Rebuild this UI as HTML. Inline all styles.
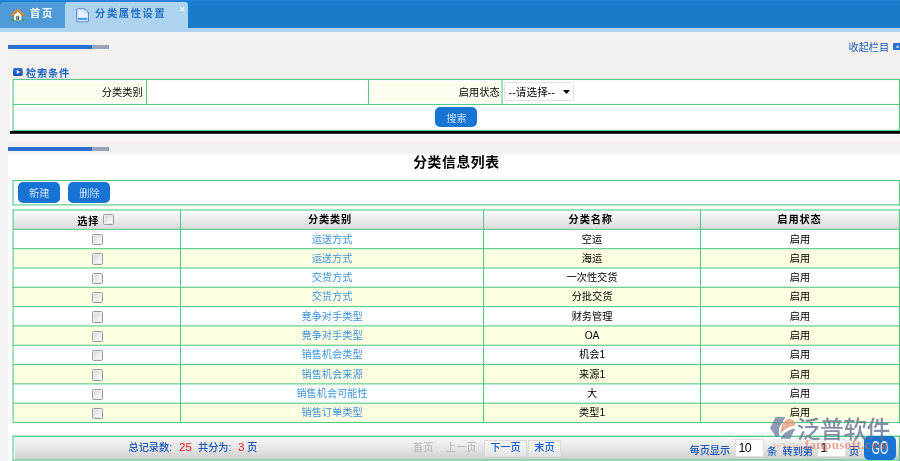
<!DOCTYPE html>
<html lang="zh-CN">
<head>
<meta charset="utf-8">
<title>分类属性设置</title>
<style>
html,body{margin:0;padding:0;}
body{width:900px;height:461px;overflow:hidden;background:#f4f4f4;position:relative;font-family:"Liberation Sans","Noto Sans CJK SC",sans-serif;font-size:10.2px;color:#000;}
.abs{position:absolute;}
#page{left:0;top:0;width:900px;height:461px;will-change:transform;}
#tabbar{left:0;top:0;width:900px;height:28px;background:linear-gradient(#2586da 0,#197bcc 2px,#197bcc 100%);}
#tabstrip{left:0;top:28px;width:900px;height:4px;background:#aed3ee;}
#tabhome{left:0;top:2px;width:65px;height:26px;background:#4f9ad8;border-top-left-radius:4px;color:#fff;font-weight:bold;font-size:10.2px;line-height:24px;letter-spacing:1.7px;}
#tabact{left:65px;top:2px;width:123px;height:26px;background:#aed3ee;border-radius:3px 3px 0 0;color:#2470c8;font-weight:bold;font-size:10.2px;line-height:24px;letter-spacing:1.7px;}
#main{left:8px;top:40px;width:892px;height:114px;background:#f3f0ed;}
#main2{left:8px;top:154px;width:892px;height:307px;background:#fff;}
.bar{height:4px;width:84px;background:#2b6fd0;}
.bar2{height:4px;width:17px;background:#9aa4b8;}
.btn{width:42px;height:20.4px;border-radius:5px;background:#1874d4;color:#fff;font-size:10.2px;font-weight:300;line-height:23px;text-align:center;text-indent:1px;}
.hd{background:linear-gradient(#fff 0,#fcfcfc 5%,#f6f6f6 12%,#e9e9e9 55%,#dcdcdc 93%,#e8dde4 100%);}
.c{text-align:center;font-size:10.2px;white-space:nowrap;}
.h{font-weight:bold;letter-spacing:.85px;}
.lk{color:#3a94e0;}
.cb{width:9.3px;height:9.3px;border:1px solid #9c9c9c;border-radius:1.5px;background:linear-gradient(135deg,#d6d6d6,#fafafa 85%);box-shadow:inset 0 0 0 1px #ececec;}
.pg{background:linear-gradient(#f6f6f6,#e6e6e6 45%,#cdcdcd);}
.pt{font-size:10.2px;line-height:14px;white-space:nowrap;}
.pb{height:15px;line-height:13.5px;font-weight:500;border:1px solid #dcdcdc;background:rgba(255,255,255,.35);color:#1b5fd0;font-size:10.2px;text-align:center;white-space:nowrap;}
.pi{width:24px;height:16px;border:1px solid #e0e0e0;background:#fff;font-size:12.4px;letter-spacing:-.7px;line-height:17.5px;padding-left:2.5px;}
</style>
</head>
<body>
<div id="page" class="abs">
<div id="tabbar" class="abs"></div>
<div id="tabstrip" class="abs"></div>
<div id="tabhome" class="abs"><svg class="abs" style="left:10px;top:5px" width="16" height="15" viewBox="0 0 16 15"><path d="M4 7.6 L7.75 4.3 L11.4 7.6 L11.4 12.9 L4 12.9 Z" fill="#f6f2ec"/><path d="M1.6 8.3 L7.75 3.1 L13.9 8.3" fill="none" stroke="#c97d30" stroke-width="2.5" stroke-linejoin="round" stroke-linecap="round"/><path d="M2.2 7.5 L7.75 2.8 L13.3 7.5" fill="none" stroke="#e9b777" stroke-width=".7" stroke-linejoin="round" stroke-linecap="round"/><rect x="6.2" y="9.2" width="2.9" height="3.9" fill="#5e5e5e"/><rect x="7.4" y="9.2" width=".5" height="3.9" fill="#b8b8b8"/><rect x="1" y="12.2" width="3.6" height="1.6" rx=".7" fill="#3fa22a"/><rect x="10.8" y="12.2" width="3.6" height="1.6" rx=".7" fill="#3fa22a"/><rect x="4" y="12.9" width="7.4" height=".8" fill="#8fbf7a"/></svg><span class="abs" style="left:30px;top:0">首页</span></div>
<div id="tabact" class="abs"><svg class="abs" style="left:11px;top:6px" width="14" height="15" viewBox="0 0 14 15"><defs><linearGradient id="dg" x1="0" y1="0" x2="0" y2="1"><stop offset="0" stop-color="#dbe6fa"/><stop offset="1" stop-color="#ffffff"/></linearGradient></defs><path d="M1.9 .8 L8.4 .8 L12.4 4.6 L12.4 12.6 Q12.4 13.8 11.2 13.8 L1.9 13.8 Q.7 13.8 .7 12.6 L.7 2 Q.7 .8 1.9 .8 Z" fill="url(#dg)" stroke="#5a8ad8" stroke-width="1.1"/><path d="M8.4 1.2 L8.4 4.6 L12 4.6 Z" fill="#f4f8ff" stroke="#8fb0e6" stroke-width=".5"/><rect x="1.7" y="9.9" width="9.7" height="2.3" fill="#4da3f2"/><rect x="1.7" y="9.2" width="9.7" height=".8" fill="#b9d8fa"/></svg><span class="abs" style="left:30px;top:0">分类属性设置</span><span class="abs" style="left:114px;top:-5.5px;color:#fff;font-size:11px;font-weight:normal;letter-spacing:0">×</span></div>
<div id="main" class="abs"></div>
<div class="abs bar" style="left:8px;top:45px"></div><div class="abs bar2" style="left:92px;top:45px"></div>
<div class="abs" style="left:848.5px;top:40.7px;color:#1b5fb8;font-size:10.2px;line-height:14px;white-space:nowrap">收起栏目</div>
<svg class="abs" style="left:893px;top:43px" width="7" height="7"><rect x="0" y="0" width="10" height="7" rx="1" fill="#2b6fd0"/><path d="M2.9 4.4 L4.6 2.3 L6.3 4.4 Z" fill="#fff"/></svg>
<svg class="abs" style="left:13.2px;top:67.9px" width="9.7" height="8.1" viewBox="0 0 9.7 8.1"><defs><linearGradient id="sg" x1="0" y1="0" x2="0" y2="1"><stop offset="0" stop-color="#2c74da"/><stop offset="1" stop-color="#1750b6"/></linearGradient></defs><rect width="9.7" height="8.1" rx="1.6" fill="url(#sg)"/><path d="M3.8 1.9 L7 4 L3.8 6 Z" fill="#fff"/></svg>
<div class="abs" style="left:26px;top:65.6px;color:#1b63c4;font-weight:bold;font-size:10.2px;letter-spacing:.85px;line-height:16px">检索条件</div>
<svg class="abs" style="left:0;top:0" width="900" height="140" viewBox="0 0 900 140"><rect x="9.5" y="78.8" width="891" height="56.5" fill="#fff"/><rect x="9.5" y="77.9" width="891" height=".9" fill="#fbe9ec"/></svg>
<svg class="abs" style="left:0;top:125px" width="900" height="12" viewBox="0 125 900 12"><rect x="9.9" y="130.95" width="891" height="2.85" fill="#000"/></svg>
<div class="abs" style="left:8px;top:135px;width:892px;height:7px;background:#f4f4f4"></div>
<div class="abs bar" style="left:8px;top:147px"></div><div class="abs bar2" style="left:92px;top:147px"></div>
<div id="main2" class="abs"></div>
<svg class="abs" style="left:0;top:0" width="900" height="140" viewBox="0 0 900 140"><rect x="15" y="81.2" width="130.2" height="21.5" fill="#fdfdf0"/><rect x="370" y="81.2" width="130.2" height="21.5" fill="#fdfdf0"/></svg>
<div class="abs" style="left:14px;top:81.3px;width:128.6px;height:23px;line-height:23px;text-align:right">分类类别</div>
<div class="abs" style="left:369px;top:81.3px;width:130.6px;height:23px;line-height:23px;text-align:right">启用状态</div>
<div class="abs" style="left:504px;top:82px;width:68px;height:17px;border:1px solid #e2e2e2;border-radius:2px;background:#fff;line-height:17px"><span class="abs" style="left:3.5px;top:.8px;white-space:nowrap;font-size:10.6px;letter-spacing:.1px">--请选择--</span><svg class="abs" style="left:58px;top:7px" width="7" height="4"><path d="M0 0 L7 0 L3.5 4 Z" fill="#000"/></svg></div>
<div class="abs btn" style="left:435px;top:107px">搜索</div>
<div class="abs" style="left:10.4px;top:154.3px;width:892px;height:17px;line-height:17px;text-align:center;font-size:13.8px;letter-spacing:.6px;font-weight:bold">分类信息列表</div>
<div class="abs btn" style="left:17.8px;top:182.4px">新建</div>
<div class="abs btn" style="left:68px;top:182.4px">删除</div>
<div class="abs hd" style="left:13px;top:211px;width:887px;height:18px"></div>
<div class="abs" style="left:13px;top:230px;width:887px;height:19px;background:#fff"></div>
<div class="abs" style="left:13px;top:249px;width:887px;height:19px;background:#ffffe1"></div>
<div class="abs" style="left:13px;top:268px;width:887px;height:20px;background:#fff"></div>
<div class="abs" style="left:13px;top:288px;width:887px;height:19px;background:#ffffe1"></div>
<div class="abs" style="left:13px;top:307px;width:887px;height:19px;background:#fff"></div>
<div class="abs" style="left:13px;top:326px;width:887px;height:20px;background:#ffffe1"></div>
<div class="abs" style="left:13px;top:346px;width:887px;height:19px;background:#fff"></div>
<div class="abs" style="left:13px;top:365px;width:887px;height:19px;background:#ffffe1"></div>
<div class="abs" style="left:13px;top:384px;width:887px;height:20px;background:#fff"></div>
<div class="abs" style="left:13px;top:404px;width:887px;height:19px;background:#ffffe1"></div>
<div class="abs" style="left:13px;top:436px;width:887px;height:25px;background:#fff"></div><div class="abs pg" style="left:15px;top:438px;width:884px;height:21.5px"></div>
<svg class="abs" style="left:0;top:0" width="900" height="461" viewBox="0 0 900 461" fill="#56cb89"><rect x="13" y="78.94" width="887" height="1.12"/><rect x="13" y="103.94" width="887" height="1.12"/><rect x="13" y="129.84" width="887" height="1.12"/><rect x="12.49" y="79.00" width="1.12" height="52.00"/><rect x="898.84" y="79.00" width="1.12" height="52.00"/><rect x="145.94" y="79.00" width="1.12" height="26.00"/><rect x="367.94" y="79.00" width="1.12" height="26.00"/><rect x="501.44" y="79.00" width="1.12" height="26.00"/><rect x="13" y="179.99" width="887" height="1.12"/><rect x="13" y="204.34" width="887" height="1.12"/><rect x="12.49" y="180.00" width="1.12" height="25.50"/><rect x="898.84" y="180.00" width="1.12" height="25.50"/><rect x="13" y="209.44" width="887" height="1.12"/><rect x="13" y="228.76" width="887" height="1.12"/><rect x="13" y="248.08" width="887" height="1.12"/><rect x="13" y="267.39" width="887" height="1.12"/><rect x="13" y="286.71" width="887" height="1.12"/><rect x="13" y="306.03" width="887" height="1.12"/><rect x="13" y="325.35" width="887" height="1.12"/><rect x="13" y="344.67" width="887" height="1.12"/><rect x="13" y="363.98" width="887" height="1.12"/><rect x="13" y="383.30" width="887" height="1.12"/><rect x="13" y="402.62" width="887" height="1.12"/><rect x="13" y="421.94" width="887" height="1.12"/><rect x="12.49" y="209.44" width="1.12" height="213.62"/><rect x="179.94" y="209.44" width="1.12" height="213.62"/><rect x="482.99" y="209.44" width="1.12" height="213.62"/><rect x="699.94" y="209.44" width="1.12" height="213.62"/><rect x="898.84" y="209.44" width="1.12" height="213.62"/><rect x="13" y="435.64" width="887" height="1.12"/><rect x="13" y="435.94" width="887" height="1.12"/><rect x="13" y="459.54" width="887" height="1.12"/><rect x="12.49" y="435.60" width="1.12" height="25.40"/><rect x="898.84" y="435.60" width="1.12" height="25.40"/></svg>
<div class="abs c h" style="left:11.5px;top:215.2px;width:167.5px;height:14px;line-height:14px"><span style="margin-right:14px">选择</span></div>
<div class="abs cb" style="left:102.5px;top:214px"></div>
<div class="abs c h" style="left:178.5px;top:212.7px;width:303.1px;height:14px;line-height:14px">分类类别</div>
<div class="abs c h" style="left:482.2px;top:212.7px;width:217.0px;height:14px;line-height:14px">分类名称</div>
<div class="abs c h" style="left:700.0px;top:212.7px;width:198.9px;height:14px;line-height:14px">启用状态</div>
<div class="abs cb" style="left:91.8px;top:234.1px"></div>
<div class="abs c lk" style="left:180.5px;top:232.5px;width:303.1px;height:14px;line-height:14px">运送方式</div>
<div class="abs c " style="left:483.6px;top:232.5px;width:216.9px;height:14px;line-height:14px">空运</div>
<div class="abs c " style="left:700.5px;top:232.5px;width:198.9px;height:14px;line-height:14px">启用</div>
<div class="abs cb" style="left:91.8px;top:253.4px"></div>
<div class="abs c lk" style="left:180.5px;top:251.8px;width:303.1px;height:14px;line-height:14px">运送方式</div>
<div class="abs c " style="left:483.6px;top:251.8px;width:216.9px;height:14px;line-height:14px">海运</div>
<div class="abs c " style="left:700.5px;top:251.8px;width:198.9px;height:14px;line-height:14px">启用</div>
<div class="abs cb" style="left:91.8px;top:272.7px"></div>
<div class="abs c lk" style="left:180.5px;top:271.1px;width:303.1px;height:14px;line-height:14px">交货方式</div>
<div class="abs c " style="left:483.6px;top:271.1px;width:216.9px;height:14px;line-height:14px">一次性交货</div>
<div class="abs c " style="left:700.5px;top:271.1px;width:198.9px;height:14px;line-height:14px">启用</div>
<div class="abs cb" style="left:91.8px;top:292.0px"></div>
<div class="abs c lk" style="left:180.5px;top:290.4px;width:303.1px;height:14px;line-height:14px">交货方式</div>
<div class="abs c " style="left:483.6px;top:290.4px;width:216.9px;height:14px;line-height:14px">分批交货</div>
<div class="abs c " style="left:700.5px;top:290.4px;width:198.9px;height:14px;line-height:14px">启用</div>
<div class="abs cb" style="left:91.8px;top:311.3px"></div>
<div class="abs c lk" style="left:180.5px;top:309.7px;width:303.1px;height:14px;line-height:14px">竞争对手类型</div>
<div class="abs c " style="left:483.6px;top:309.7px;width:216.9px;height:14px;line-height:14px">财务管理</div>
<div class="abs c " style="left:700.5px;top:309.7px;width:198.9px;height:14px;line-height:14px">启用</div>
<div class="abs cb" style="left:91.8px;top:330.7px"></div>
<div class="abs c lk" style="left:180.5px;top:329.1px;width:303.1px;height:14px;line-height:14px">竞争对手类型</div>
<div class="abs c " style="left:483.6px;top:329.1px;width:216.9px;height:14px;line-height:14px">OA</div>
<div class="abs c " style="left:700.5px;top:329.1px;width:198.9px;height:14px;line-height:14px">启用</div>
<div class="abs cb" style="left:91.8px;top:350.0px"></div>
<div class="abs c lk" style="left:180.5px;top:348.4px;width:303.1px;height:14px;line-height:14px">销售机会类型</div>
<div class="abs c " style="left:483.6px;top:348.4px;width:216.9px;height:14px;line-height:14px">机会1</div>
<div class="abs c " style="left:700.5px;top:348.4px;width:198.9px;height:14px;line-height:14px">启用</div>
<div class="abs cb" style="left:91.8px;top:369.3px"></div>
<div class="abs c lk" style="left:180.5px;top:367.7px;width:303.1px;height:14px;line-height:14px">销售机会来源</div>
<div class="abs c " style="left:483.6px;top:367.7px;width:216.9px;height:14px;line-height:14px">来源1</div>
<div class="abs c " style="left:700.5px;top:367.7px;width:198.9px;height:14px;line-height:14px">启用</div>
<div class="abs cb" style="left:91.8px;top:388.6px"></div>
<div class="abs c lk" style="left:180.5px;top:387.0px;width:303.1px;height:14px;line-height:14px">销售机会可能性</div>
<div class="abs c " style="left:483.6px;top:387.0px;width:216.9px;height:14px;line-height:14px">大</div>
<div class="abs c " style="left:700.5px;top:387.0px;width:198.9px;height:14px;line-height:14px">启用</div>
<div class="abs cb" style="left:91.8px;top:407.9px"></div>
<div class="abs c lk" style="left:180.5px;top:406.3px;width:303.1px;height:14px;line-height:14px">销售订单类型</div>
<div class="abs c " style="left:483.6px;top:406.3px;width:216.9px;height:14px;line-height:14px">类型1</div>
<div class="abs c " style="left:700.5px;top:406.3px;width:198.9px;height:14px;line-height:14px">启用</div>
<div class="abs pt" style="left:128.5px;top:441px;color:#1c57b8;font-weight:500">总记录数:</div>
<div class="abs pt" style="left:179px;top:440.2px;color:#f02020;font-size:11.5px">25</div>
<div class="abs pt" style="left:198px;top:441px;color:#1c57b8;font-weight:500">共分为:</div>
<div class="abs pt" style="left:238px;top:440.2px;color:#f02020;font-size:11.5px">3</div>
<div class="abs pt" style="left:247px;top:441px;color:#1c57b8;font-weight:500">页</div>
<div class="abs pt" style="left:413px;top:441px;color:#b4b4b4">首页</div>
<div class="abs pt" style="left:446px;top:441px;color:#b4b4b4">上一页</div>
<div class="abs pb" style="left:484px;top:440px;width:41px">下一页</div>
<div class="abs pb" style="left:528px;top:440px;width:31px">末页</div>
<div class="abs pt" style="left:689.5px;top:444px;color:#1c57b8;font-weight:500">每页显示</div>
<div class="abs pi" style="left:735px;top:439px">10</div>
<div class="abs pt" style="left:767px;top:444.5px;color:#1c57b8;font-weight:500">条</div>
<div class="abs pt" style="left:782.5px;top:444.5px;color:#1c57b8;font-weight:500">转到第</div>
<div class="abs pi" style="left:817px;top:439px">1</div>
<div class="abs pt" style="left:849px;top:444.5px;color:#1c57b8;font-weight:500">页</div>
<div class="abs" style="left:864px;top:436.4px;width:31.5px;height:23.3px;border-radius:5px;background:#1874d4;overflow:hidden"><span class="abs" style="left:-4.5px;top:0;width:40px;height:23px;line-height:24.5px;color:#fff;font-size:18px;text-align:center;transform:scaleX(.6)">GO</span></div>
<svg class="abs" style="left:0;top:0;opacity:.8" width="900" height="461" viewBox="0 0 900 461"><path d="M775.5 417 L785.5 417 L779.5 427 L778.8 433 L779.5 436 L776 437.3 L770.2 428 Z" fill="#7482a2"/><path d="M780.7 433.5 C780.5 427 783 420.5 789 418.8 C793 419 795.5 422 795.5 425.5 C791 425.8 785 428.5 780.7 433.5 Z" fill="#e39a7c"/><path d="M795.4 428.4 L790.2 438.8 L780.7 438.8 C782 434.5 787 429.5 795.4 428.4 Z" fill="#7482a2"/></svg>
<div class="abs" style="left:796.8px;top:411.8px;font-size:23.8px;letter-spacing:-.6px;font-weight:500;line-height:32px;color:#66748f;opacity:.8;white-space:nowrap;font-family:'Noto Sans CJK SC',sans-serif">泛普软件</div>
<div class="abs" style="left:772.5px;top:437px;font-family:'Liberation Serif',serif;font-weight:bold;font-size:13px;line-height:15px;letter-spacing:.4px;color:#dc6a50;opacity:.62;white-space:nowrap"><span style="opacity:.4">www.</span>fanpusoft.com</div>
</div>
</body>
</html>
